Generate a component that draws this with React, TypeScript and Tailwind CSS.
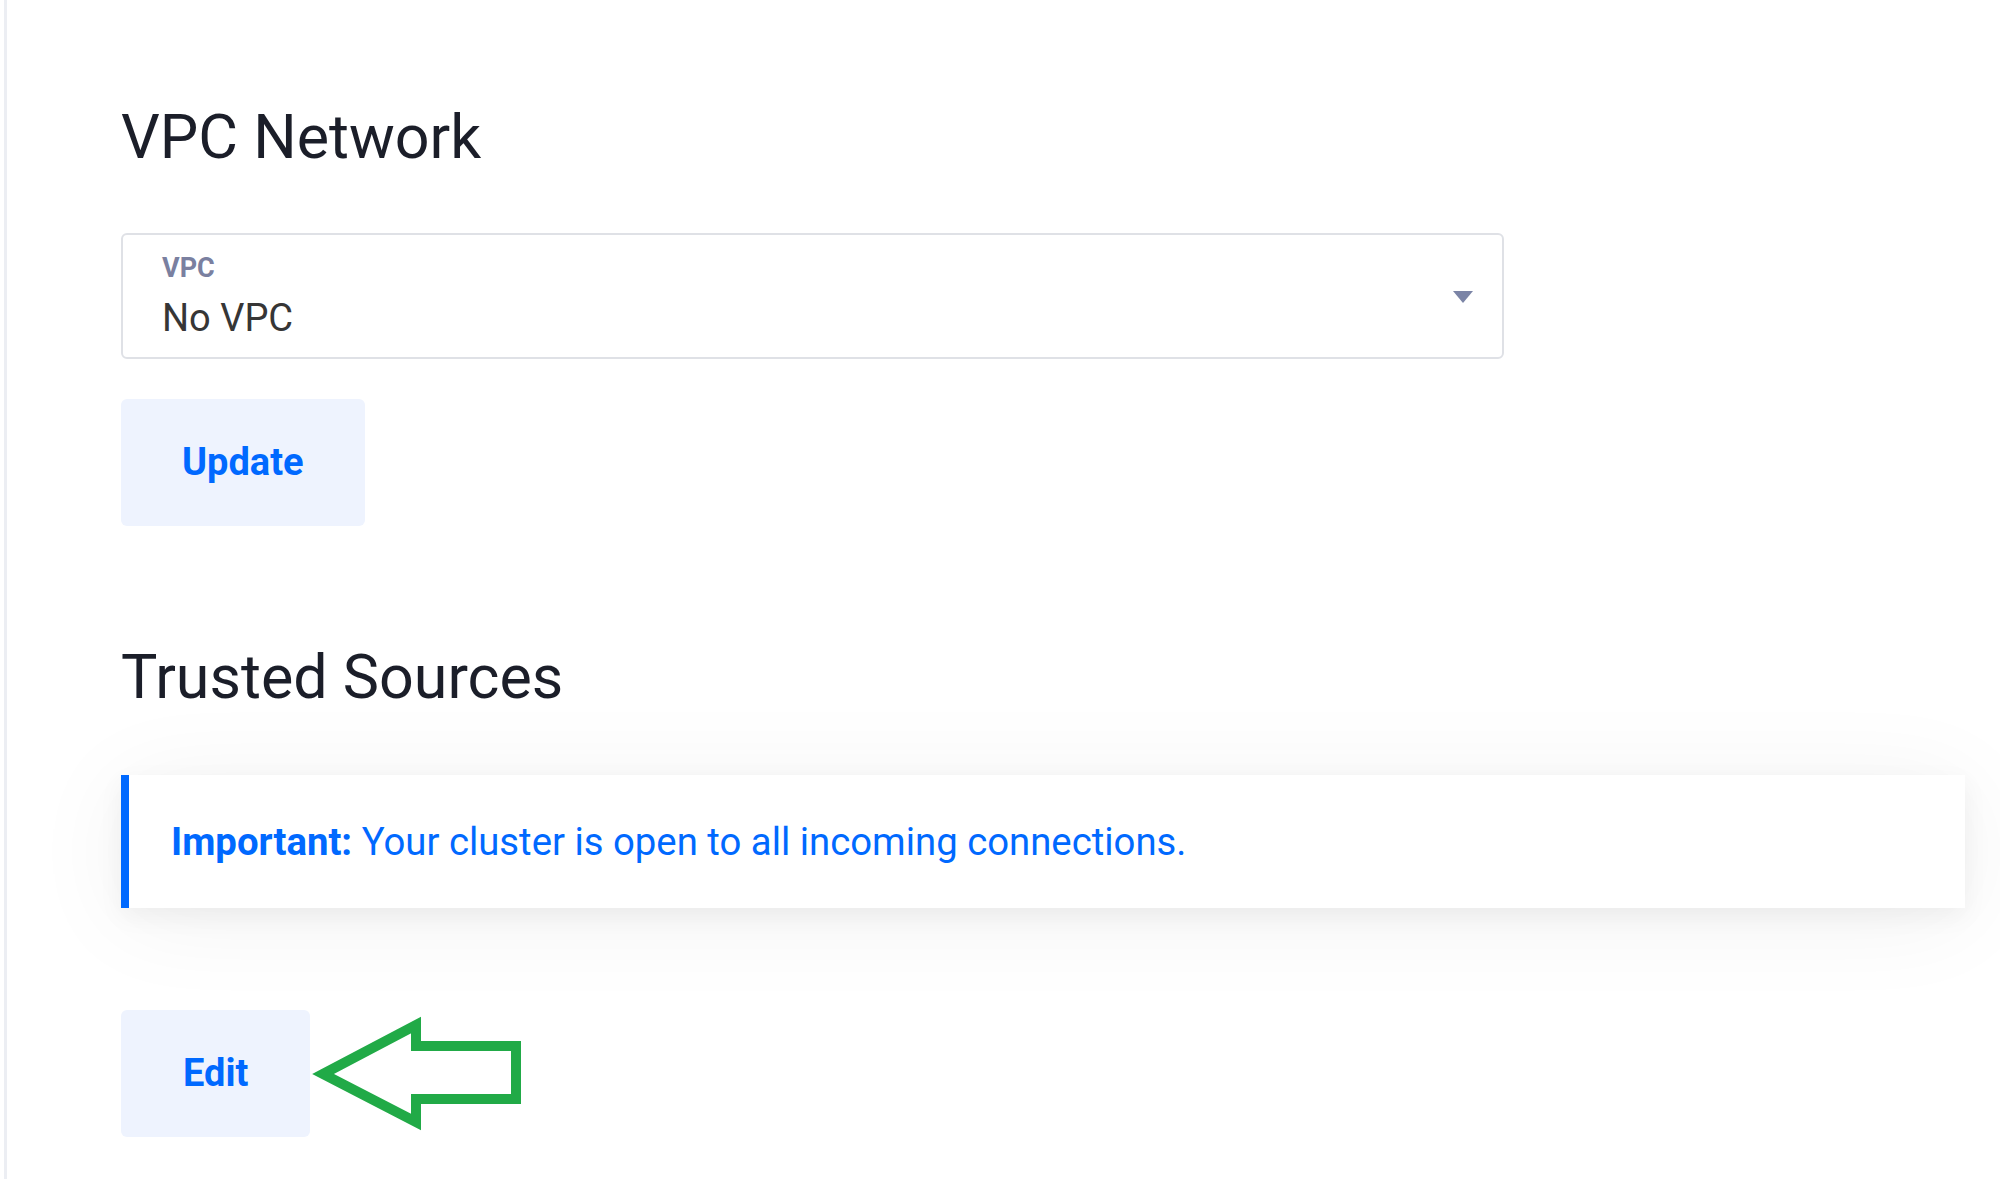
import { useState } from "react";

const vpcOptions = ["No VPC", "default-nyc1", "default-sfo3"];

function ArrowMark() {
  return (
    <svg width="220" height="120" viewBox="0 0 220 120" className="-ml-px shrink-0">
      <path
        d="M14 60 L107 11 L107 32 L207 32 L207 85 L107 85 L107 108 Z"
        fill="none"
        stroke="#21aa47"
        strokeWidth="10"
        strokeLinejoin="miter"
      />
    </svg>
  );
}

export default function App() {
  const [vpc] = useState(vpcOptions[0]);

  return (
    <div className="min-h-screen bg-white pl-[4px] font-['Roboto','Liberation_Sans',sans-serif]">
      <div className="min-h-screen border-l-[3px] border-[#eceef3] pl-[114px] pr-[35px] pt-[101px] pb-[40px]">
        <h2 className="text-[61px] leading-[73px] font-normal text-[#1b1e29]">VPC Network</h2>

        <div className="mt-[59px] w-[1383px] h-[126px] rounded-[6px] border-2 border-[#dfe1e6] flex items-center justify-between pl-[39px] pr-[28px]">
          <div className="flex flex-col">
            <span className="text-[27px] leading-[32px] font-bold text-[#7a80a0]">VPC</span>
            <span className="mt-[12px] text-[38px] leading-[44px] text-[#363636]">{vpc}</span>
          </div>
          <svg width="22" height="14" viewBox="0 0 22 14" className="mt-[2px]">
            <path d="M1 1 L21 1 L11 13 Z" fill="#7b84a6" />
          </svg>
        </div>

        <button className="mt-[40px] h-[127px] px-[61px] rounded-[6px] bg-[#eef3fe] text-[38px] font-bold text-[#0069ff]">
          Update
        </button>

        <h2 className="mt-[115px] text-[61px] leading-[73px] font-normal text-[#1b1e29]">Trusted Sources</h2>

        <div className="mt-[61px] h-[133px] flex items-center bg-white border-l-[8px] border-[#0069ff] pl-[42px] shadow-[0_8px_24px_rgba(0,0,0,0.05),0_10px_100px_rgba(0,0,0,0.06)]">
          <p className="text-[38.3px] leading-[44px] text-[#0069ff]">
            <span className="font-bold">Important:</span> Your cluster is open to all incoming connections.
          </p>
        </div>

        <div className="mt-[102px] flex items-center">
          <button className="h-[127px] px-[62px] rounded-[6px] bg-[#eef3fe] text-[38px] font-bold text-[#0069ff]">
            Edit
          </button>
          <ArrowMark />
        </div>
      </div>
    </div>
  );
}
